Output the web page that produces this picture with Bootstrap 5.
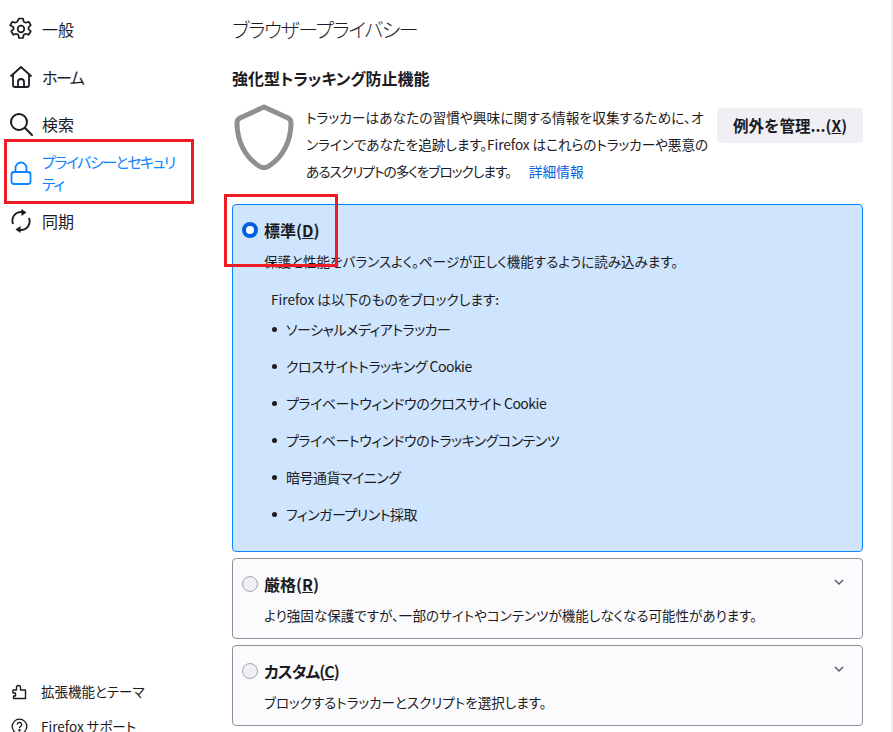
<!DOCTYPE html>
<html lang="ja">
<head>
<meta charset="utf-8">
<link href="https://cdn.jsdelivr.net/npm/bootstrap@5.3.0/dist/css/bootstrap.min.css" rel="stylesheet">
<style>
html,body{height:732px;overflow:hidden}
body{font-family:"Noto Sans CJK JP","Liberation Sans",sans-serif;font-size:14px;color:#1c1b22;background:#fff;font-feature-settings:"palt";position:relative}
.shell{height:732px}
.side{width:232px;flex:none;position:relative}
.side-item{display:flex;align-items:center;color:#1c1b22;font-size:16px;padding-left:9px;gap:9px;height:48px}
.side-item svg{flex:none;width:24px;height:24px}
.side-top{padding-top:5px}
.side-short{height:47px}
.kana-tight{letter-spacing:-1.5px}
.side-active{color:#0a84ff;line-height:22px;height:48px;align-items:center;margin-top:1px;font-size:15px}
.side-active span{width:138px}
.side-foot{position:absolute;left:0;right:0;top:674px}
.foot-item{display:flex;align-items:center;font-size:13.5px;height:35px;padding-left:11px;gap:13px}
.foot-item svg{width:17px;height:17px;flex:none}
.main{width:631px;flex:none;padding-top:15px}
.page-title{font-size:20px;font-weight:300;line-height:30px;margin:0;letter-spacing:-1.4px}
.sec-title{font-size:16px;font-weight:700;line-height:22px;margin:22px 0 0}
.intro{margin-top:13px;height:102px}
.shield{width:60px;height:66px;flex:none;margin:2px 0 0 2px}
.intro-text{width:410px;flex:none;margin-left:12px;line-height:27px;font-size:13.7px;margin-top:2px;letter-spacing:.05px}
.intro-l2{letter-spacing:-.1px}
.intro-l3{letter-spacing:-1px}
.intro-text a{color:#0060df;text-decoration:none;margin-left:18px}
.mng{margin-left:auto;flex:none;background:#f0f0f4;border:0;border-radius:4px;font-weight:700;font-size:15.5px;color:#1c1b22;width:146px;height:35px;padding:0;margin-top:6px}
.opt{border:1px solid #8f8f9d;border-radius:4px;background:#fbfbfe;margin-bottom:6px;padding:13px 9px 0;height:81px;position:relative}
.opt-on{background:#cfe4fd;border-color:#0a84ff;height:348px}
.opt-head{display:flex;align-items:center;height:24px;gap:6px;font-weight:700;font-size:16px}
.opt-head .form-check-input{width:16px;height:16px;margin:0;background-color:#f0f0f4;border:1px solid #a5a5ae;flex:none}
.opt-head .form-check-input:checked{background:#fff;border:4px solid #0060df}
.head-kana{letter-spacing:-1px}
.opt-desc{margin:9px 0 0 22px;font-size:13.55px;line-height:20px}
.opt-sub{margin:18px 0 0 29px;font-size:13.7px;line-height:20px}
.blist{list-style:none;margin:2px 0 0 30px;padding:0}
.blist li{height:37px;line-height:37px;font-size:14px;letter-spacing:-.5px;position:relative;padding-left:14px}
.blist li::before{content:"";position:absolute;left:0;top:16px;width:5px;height:5px;border-radius:50%;background:#1c1b22}
.chev{position:absolute;right:17px;top:17px;width:12px;height:12px}
.redbox{position:absolute;border:3px solid #ed1c24;pointer-events:none}
.rb-a{left:4px;top:139px;width:190px;height:65px}
.rb-b{left:224px;top:194px;width:114px;height:73px}
.sbar{position:absolute;left:891px;top:0;width:2px;height:732px;background:#f0f0f0}
</style>
</head>
<body>
<div class="shell d-flex">
  <nav class="side">
    <div class="side-top">
      <div class="side-item"><svg viewBox="0 0 24 24" fill="none" stroke="#1c1b22" stroke-width="1.7" stroke-linejoin="round"><path d="M10 1.500h4l.7 3.200 2 1 3-1 2.100 3.500-2.300 2.100v1.900l2.300 2.100-2.100 3.500-3-1-2 1-.7 3.200h-4l-.7-3.200-2-1-3 1-2.100-3.500 2.300-2.100v-1.900L1.200 8.200l2.100-3.500 3 1 2-1z"/><circle cx="12" cy="12" r="3.300"/></svg><span>一般</span></div>
      <div class="side-item side-short"><svg viewBox="0 0 24 24" fill="none" stroke="#1c1b22" stroke-width="1.800" stroke-linejoin="round"><path d="M1.500 11.500 12 2l10.500 9.500M4 9.500V20a2 2 0 0 0 2 2h12a2 2 0 0 0 2-2V9.500M9 22v-5a3 3 0 0 1 6 0v5"/></svg><span class="kana-tight">ホーム</span></div>
      <div class="side-item"><svg viewBox="0 0 24 24" fill="none" stroke="#1c1b22" stroke-width="2" stroke-linecap="round"><circle cx="10" cy="10" r="8"/><path d="m16 16 7 7"/></svg><span>検索</span></div>
      <div class="side-item side-active"><svg viewBox="0 0 24 24" fill="none" stroke="#0a84ff" stroke-width="1.800" stroke-linejoin="round"><rect x="2.500" y="11" width="19" height="12" rx="2.500"/><path d="M6.500 11V7a5.500 5.500 0 0 1 11 0v4"/></svg><span class="kana-tight">プライバシーとセキュリティ</span></div>
      <div class="side-item"><svg viewBox="0 0 24 24" fill="none" stroke="#1c1b22" stroke-width="2"><path d="M4 15a9 9 0 0 1 3-10.500 9 9 0 0 1 7-1.300"/><path d="M20 9a9 9 0 0 1-3 10.500 9 9 0 0 1-7 1.300"/><path fill="#1c1b22" stroke="none" d="m12.500 0 5 3.500-5 3.500zM11.500 24l-5-3.500 5-3.500z"/></svg><span>同期</span></div>
    </div>
    <div class="side-foot">
      <div class="foot-item"><svg viewBox="0 0 17 17" fill="none" stroke="#1c1b22" stroke-width="1.400" stroke-linejoin="round"><path d="M2 7h3.500V4.500a2 2 0 0 1 4 0V7h5v8.500H2.500v-2.500H4.500V10H2z"/></svg><span>拡張機能とテーマ</span></div>
      <div class="foot-item"><svg viewBox="0 0 17 17" fill="none" stroke="#1c1b22" stroke-width="1.300"><circle cx="8.500" cy="8.500" r="7.300"/><path d="M6.300 6.500a2.200 2.200 0 1 1 3.500 1.800c-.8.500-1.300 1-1.300 1.900"/><circle cx="8.500" cy="12.300" r=".6" fill="#1c1b22"/></svg><span>Firefox サポート</span></div>
    </div>
  </nav>
  <main class="main">
    <h1 class="page-title">ブラウザープライバシー</h1>
    <h2 class="sec-title">強化型トラッキング防止機能</h2>
    <div class="intro d-flex">
      <svg class="shield" viewBox="0 0 60 66" fill="none" stroke="#8f8f8f" stroke-width="5" stroke-linejoin="round"><path d="M30 3 54 14c2 1 3 3 3 5 0 18-8 34-22 43-3 2-7 2-10 0C11 53 3 37 3 19c0-2 1-4 3-5z"/></svg>
      <div class="intro-text">トラッカーはあなたの習慣や興味に関する情報を収集するために、オ<br><span class="intro-l2">ンラインであなたを追跡します。Firefox はこれらのトラッカーや悪意の</span><br><span class="intro-l3">あるスクリプトの多くをブロックします。</span><a href="#">詳細情報</a></div>
      <button type="button" class="btn mng">例外を管理...(<u>X</u>)</button>
    </div>
    <section class="opt opt-on">
      <div class="opt-head"><input class="form-check-input" type="radio" name="lv" checked aria-label="標準"><span>標準(<u>D</u>)</span></div>
      <p class="opt-desc">保護と性能をバランスよく。ページが正しく機能するように読み込みます。</p>
      <p class="opt-sub">Firefox は以下のものをブロックします:</p>
      <ul class="blist">
        <li>ソーシャルメディアトラッカー</li>
        <li>クロスサイトトラッキング Cookie</li>
        <li>プライベートウィンドウのクロスサイト Cookie</li>
        <li>プライベートウィンドウのトラッキングコンテンツ</li>
        <li>暗号通貨マイニング</li>
        <li>フィンガープリント採取</li>
      </ul>
    </section>
    <section class="opt">
      <div class="opt-head"><input class="form-check-input" type="radio" name="lv" aria-label="厳格"><span>厳格(<u>R</u>)</span></div>
      <p class="opt-desc">より強固な保護ですが、一部のサイトやコンテンツが機能しなくなる可能性があります。</p>
      <svg class="chev" viewBox="0 0 12 12" fill="none" stroke="#5b5b66" stroke-width="1.500"><path d="m2 4 4 4 4-4"/></svg>
    </section>
    <section class="opt">
      <div class="opt-head"><input class="form-check-input" type="radio" name="lv" aria-label="カスタム"><span class="head-kana">カスタム(<u>C</u>)</span></div>
      <p class="opt-desc">ブロックするトラッカーとスクリプトを選択します。</p>
      <svg class="chev" viewBox="0 0 12 12" fill="none" stroke="#5b5b66" stroke-width="1.500"><path d="m2 4 4 4 4-4"/></svg>
    </section>
  </main>
</div>
<div class="redbox rb-a"></div>
<div class="redbox rb-b"></div>
<div class="sbar"></div>
</body>
</html>
